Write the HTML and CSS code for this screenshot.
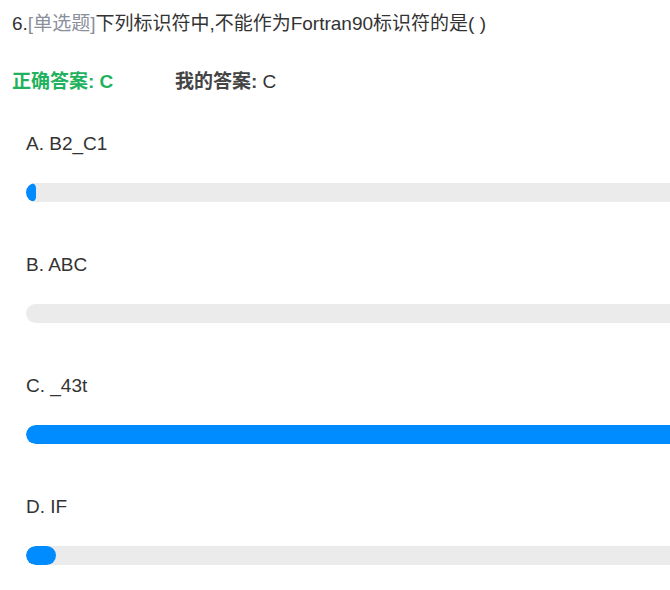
FILE: index.html
```html
<!DOCTYPE html>
<html lang="zh-CN">
<head>
<meta charset="utf-8">
<title>题目统计</title>
<link rel="stylesheet" href="styles.css">
</head>
<body>
<div class="page">
  <div class="question">6.<span class="qtype">[单选题]</span>下列标识符中,不能作为Fortran90标识符的是( )</div>
  <div class="answers">
    <div class="right-answer">正确答案: C</div>
    <div class="my-answer"><b>我的答案:</b> C</div>
  </div>
  <div class="options">
    <div class="option">
      <div class="opt-label">A. B2_C1</div>
      <div class="track"><div class="fill" style="width:10px"></div></div>
    </div>
    <div class="option">
      <div class="opt-label">B. ABC</div>
      <div class="track"><div class="fill" style="width:0px"></div></div>
    </div>
    <div class="option">
      <div class="opt-label">C. _43t</div>
      <div class="track"><div class="fill" style="width:100%"></div></div>
    </div>
    <div class="option">
      <div class="opt-label">D. IF</div>
      <div class="track"><div class="fill" style="width:30px"></div></div>
    </div>
  </div>
</div>
</body>
</html>
```

FILE: styles.css
```css
html, body {
  margin: 0;
  padding: 0;
  overflow: hidden;
  background: #ffffff;
}
body {
  font-family: "Liberation Sans", Arial, "Noto Sans CJK SC", sans-serif;
  font-size: 19px;
  line-height: 24px;
  color: #333333;
}
.page {
  padding: 12px 0 0 12px;
  width: 720px;
}
.question {
  white-space: nowrap;
  color: #333333;
}
.qtype {
  color: #8a8f9c;
}
.answers {
  display: flex;
  margin-top: 34px;
}
.right-answer {
  width: 163px;
  font-weight: bold;
  color: #1fb25e;
}
.my-answer {
  color: #333333;
}
.my-answer b {
  color: #444444;
}
.options {
  margin-top: 38px;
  padding-left: 14px;
}
.option {
  margin-bottom: 51px;
}
.opt-label {
  color: #333333;
}
.track {
  margin-top: 27px;
  height: 19px;
  width: 700px;
  background: #ebebeb;
  border-radius: 9.5px;
  overflow: hidden;
}
.fill {
  height: 100%;
  background: #008bff;
  border-radius: 9.5px;
}
```
